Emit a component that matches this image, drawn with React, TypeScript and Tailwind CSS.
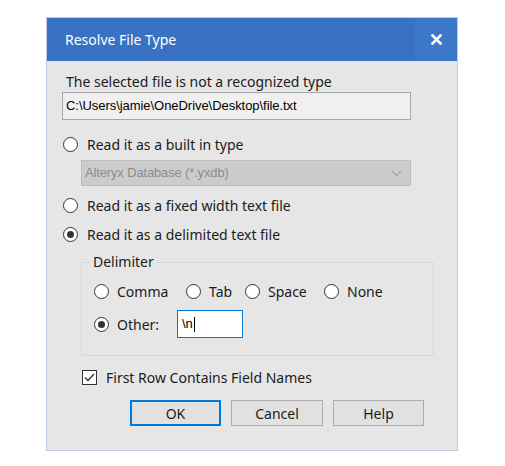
import React from 'react';

const ui = { fontFamily: '"Segoe UI", "Noto Sans", "Open Sans", sans-serif' };
const classic = { fontFamily: '"Liberation Sans", Arial, sans-serif' };

// windows-style radio dot
const Radio = ({ checked = false }: { checked?: boolean }) => (
  <span className="flex h-[15px] w-[15px] shrink-0 items-center justify-center rounded-full border border-[#333] bg-white">
    {checked && <span className="h-[7px] w-[7px] rounded-full bg-[#333]" />}
  </span>
);

const RadioRow = ({ label, checked }: { label: string; checked?: boolean }) => (
  <div className="flex h-[20px] items-center gap-[9px] pl-[1px]">
    <Radio checked={checked} />
    <span>{label}</span>
  </div>
);

const Option = ({ label, width, checked }: { label: string; width: string; checked?: boolean }) => (
  <div className={`flex items-center gap-[8px] ${width}`}>
    <Radio checked={checked} />
    <span>{label}</span>
  </div>
);

const App = () => {
  return (
    <div className="h-[466px] w-[505px] bg-white pl-[46px] pt-[17px] text-[14px] text-[#1b1b1b]" style={ui}>
      <div className="w-[412px] border border-[#bccbe2] bg-[#e6e6e6]">
        {/* title bar */}
        <div className="flex h-[43px] items-center justify-between bg-[#3a72c3] text-white">
          <span className="pl-[18px] text-[14px]">Resolve File Type</span>
          <span className="flex h-full w-[42px] items-center justify-center bg-[#3d77c9]">
            <svg width="11" height="11" viewBox="0 0 11 11">
              <path d="M1.5 1.5 L9.5 9.5 M9.5 1.5 L1.5 9.5" stroke="white" strokeWidth="2.6" strokeLinecap="square" />
            </svg>
          </span>
        </div>

        <div className="pb-[24px] pl-[15px]">
          <div className="mt-[10px] flex h-[20px] items-center pl-[4px]">The selected file is not a recognized type</div>
          <div
            className="mt-[1px] flex h-[28px] w-[349px] items-center border border-[#a6a6a6] bg-[#f0f0f0] pl-[3px] text-[13px] tracking-[-0.05px] text-black"
            style={classic}
          >
            C:\Users\jamie\OneDrive\Desktop\file.txt
          </div>

          <div className="mt-[14px]">
            <RadioRow label="Read it as a built in type" />
          </div>
          <div
            className="ml-[19px] mt-[6px] flex h-[26px] w-[330px] items-center justify-between border border-[#bdbdbd] bg-[#cccccc] pl-[3px] pr-[8px] text-[13px] tracking-[-0.15px] text-[#8c8c8c]"
            style={classic}
          >
            <span>Alteryx Database (*.yxdb)</span>
            <svg width="11" height="7" viewBox="0 0 11 7">
              <path d="M1 1 L5.5 5.5 L10 1" fill="none" stroke="#a3a3a3" strokeWidth="1.2" />
            </svg>
          </div>

          <div className="mt-[9px]">
            <RadioRow label="Read it as a fixed width text file" />
          </div>
          <div className="mt-[9px]">
            <RadioRow label="Read it as a delimited text file" checked />
          </div>

          {/* delimiter group */}
          <div className="relative ml-[19px] mt-[18px] h-[94px] w-[353px] border border-[#d8d8d8] pl-[12px] pt-[18px]">
            <span className="absolute left-[8px] top-[-11px] bg-[#e6e6e6] px-[3px] leading-[20px]">Delimiter</span>
            <div className="flex h-[20px] items-center">
              <Option label="Comma" width="w-[92px]" />
              <Option label="Tab" width="w-[59px]" />
              <Option label="Space" width="w-[79px]" />
              <Option label="None" width="w-[80px]" />
            </div>
            <div className="mt-[9px] flex h-[28px] items-center">
              <Option label="Other:" width="w-[83px]" checked />
              <div className="flex h-[28px] w-[66px] items-center border border-[#0078d7] bg-white pl-[4px] text-[13px] text-black" style={classic}>
                <span>\n</span>
                <span className="ml-[1px] h-[15px] w-[1px] bg-black" />
              </div>
            </div>
          </div>

          {/* checkbox */}
          <div className="ml-[20px] mt-[11px] flex h-[20px] items-center gap-[9px]">
            <span className="flex h-[15px] w-[15px] items-center justify-center border border-[#333] bg-white">
              <svg width="11" height="9" viewBox="0 0 11 9">
                <path d="M1 4.5 L4 7.5 L10 1" fill="none" stroke="#333" strokeWidth="1.3" />
              </svg>
            </span>
            <span>First Row Contains Field Names</span>
          </div>

          {/* buttons */}
          <div className="ml-[68px] mt-[13px] flex gap-[10px]">
            <button className="h-[26px] w-[91px] border-2 border-[#0078d7] bg-[#e1e1e1] text-[14px]">OK</button>
            <button className="h-[26px] w-[92px] border border-[#adadad] bg-[#e1e1e1] text-[14px]">Cancel</button>
            <button className="h-[26px] w-[91px] border border-[#adadad] bg-[#e1e1e1] text-[14px]">Help</button>
          </div>
        </div>
      </div>
    </div>
  );
};

export default App;
